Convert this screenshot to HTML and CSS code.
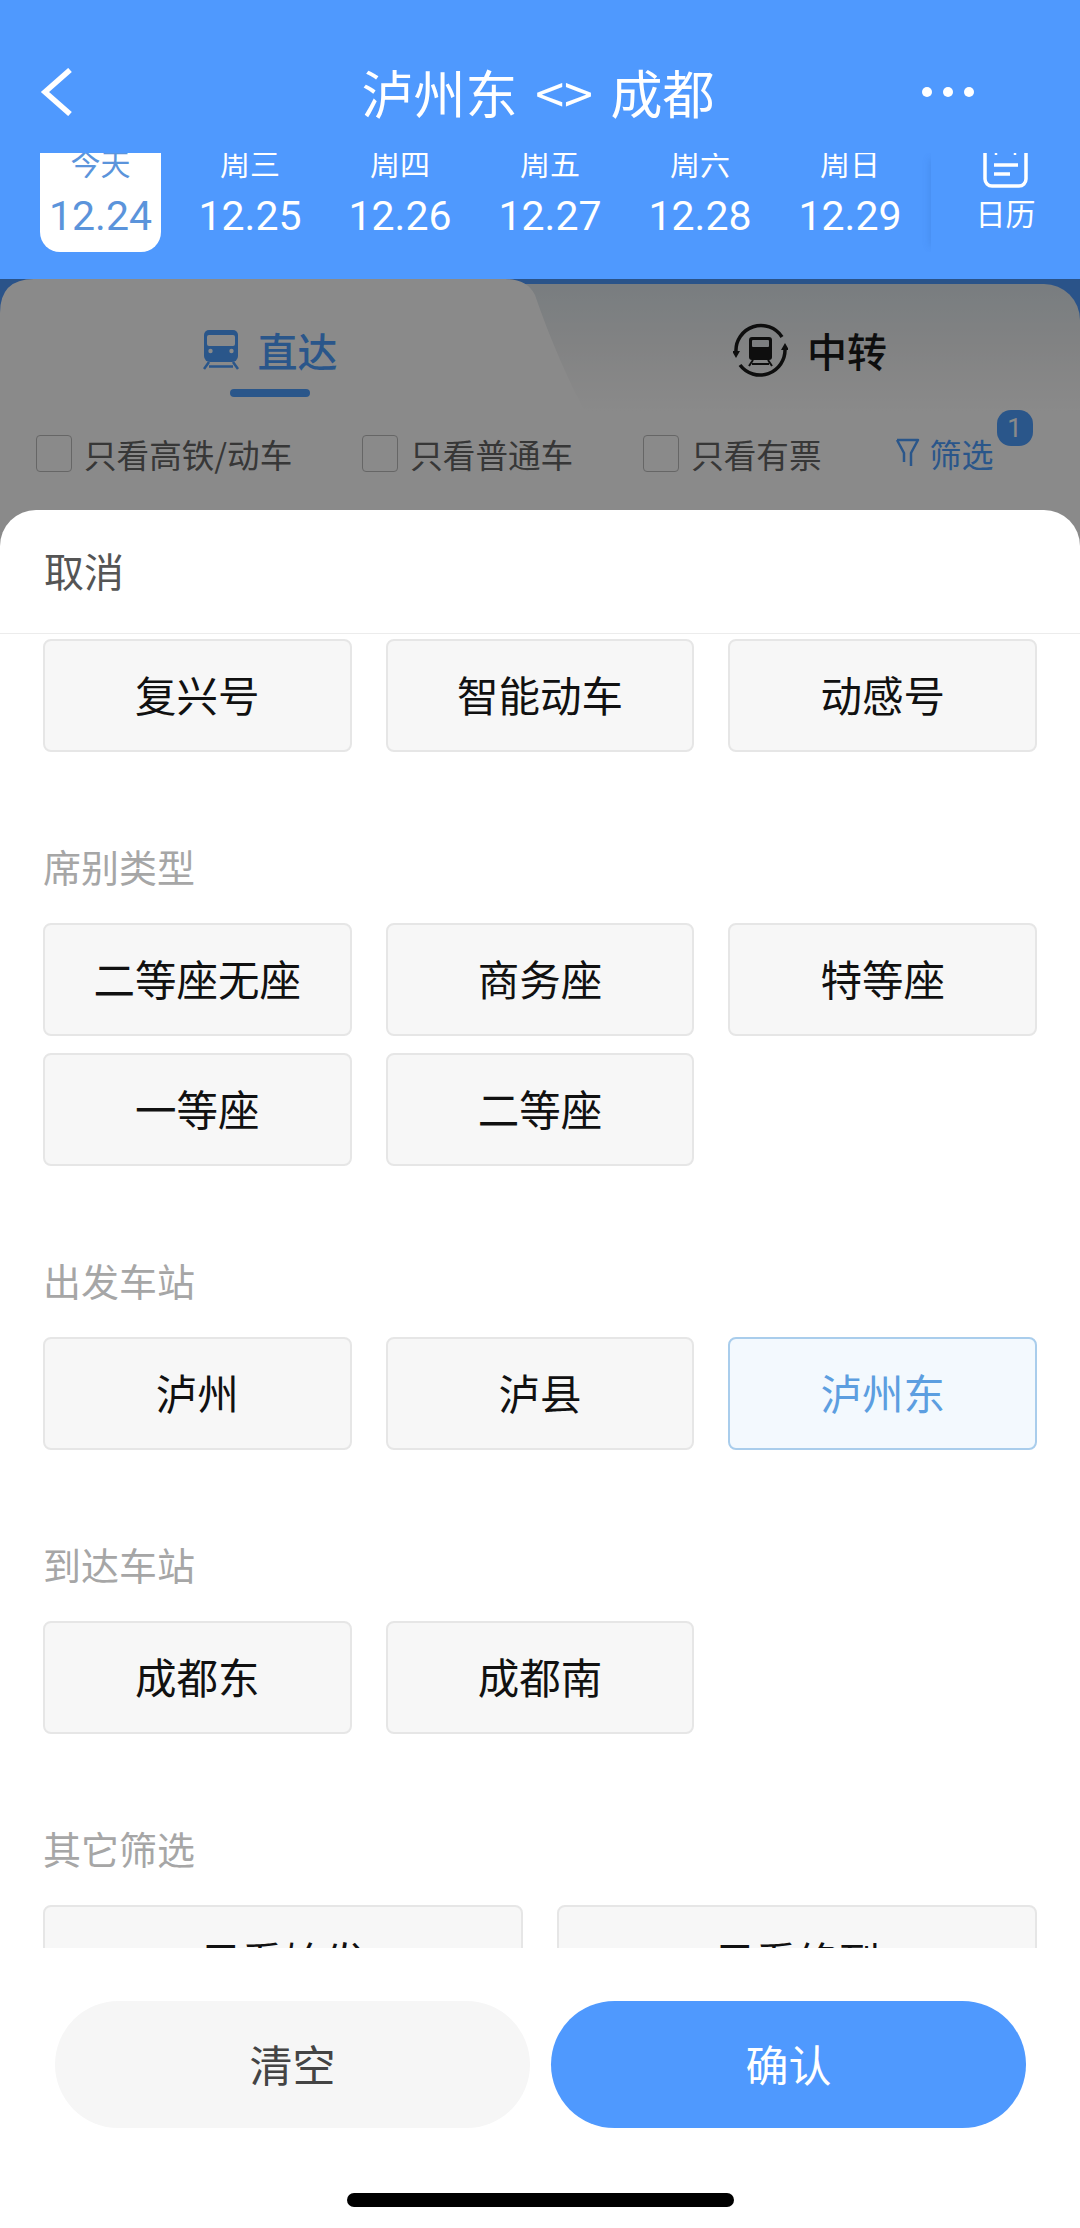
FILE: index.html
```html
<!DOCTYPE html>
<html lang="zh-CN">
<head>
    <meta charset="UTF-8">
    <meta name="viewport" content="width=device-width, initial-scale=1.0">
    <title>泸州东 - 成都 筛选</title>
    <link rel="stylesheet" href="styles.css">
</head>
<body>

    <div class="page">
        <!-- Blue header -->
        <div class="header">
            <div class="title-row">
                <svg class="back-icon" width="34" height="48" viewBox="0 0 34 48"><path d="M30 2 L5 24 L30 46" fill="none" stroke="#fff" stroke-width="5.5"/></svg>
                <div class="title">泸州东 &lt;&gt; 成都</div>
                <div class="more"><span></span><span></span><span></span></div>
            </div>
            <div class="dates">
                <div class="day day-active">
                    <div class="day-week">今天</div>
                    <div class="day-num">12.24</div>
                </div>
                <div class="day">
                    <div class="day-week">周三</div>
                    <div class="day-num">12.25</div>
                </div>
                <div class="day">
                    <div class="day-week">周四</div>
                    <div class="day-num">12.26</div>
                </div>
                <div class="day">
                    <div class="day-week">周五</div>
                    <div class="day-num">12.27</div>
                </div>
                <div class="day">
                    <div class="day-week">周六</div>
                    <div class="day-num">12.28</div>
                </div>
                <div class="day">
                    <div class="day-week">周日</div>
                    <div class="day-num">12.29</div>
                </div>
                <div class="calendar">
                    <svg width="45" height="35" viewBox="0 0 45 35" fill="none" stroke="#fff" stroke-width="3.5">
                        <path d="M2 0 V26 a7 7 0 0 0 7 7 H36 a7 7 0 0 0 7 -7 V0"/>
                        <path d="M11 12 H35 M11 21 H27"/>
                        <path d="M13 0 V2 M32 0 V2" stroke-width="2.5"/>
                    </svg>
                    <div class="calendar-label">日历</div>
                </div>
            </div>
        </div>

        <!-- Train list tabs, dimmed behind the sheet -->
        <div class="panel">
            <div class="tabs">
                <div class="tab tab-direct">
                    <div class="tab-label">
                        <svg width="36" height="40" viewBox="0 0 36 40">
                            <path d="M6 0 H30 a5 5 0 0 1 5 5 V26 a6 6 0 0 1 -6 6 H7 a6 6 0 0 1 -6 -6 V5 a5 5 0 0 1 5 -5z" fill="#4f9fff"/>
                            <rect x="4" y="5" width="28" height="11" rx="2" fill="#fff"/>
                            <circle cx="7.5" cy="21" r="2.2" fill="#fff"/>
                            <circle cx="28.5" cy="21" r="2.2" fill="#fff"/>
                            <path d="M6 32 L1 39 M30 32 L35 39 M6 36.5 H30" stroke="#4f9fff" stroke-width="2.5" fill="none"/>
                        </svg>
                        <span>直达</span>
                    </div>
                    <div class="tab-line"></div>
                </div>
                <div class="tab tab-transfer">
                    <div class="tab-label">
                        <svg width="55" height="55" viewBox="0 0 55 55">
                            <path d="M3 29 A25 25 0 0 1 49 14 M52 26 A25 25 0 0 1 7 42" fill="none" stroke="#1a1a1a" stroke-width="3.5"/>
                            <path d="M-1 28 L7 28 L3 35z M48 27 L56 27 L52 20z" fill="#1a1a1a"/>
                            <path d="M19 14 H36 a3 3 0 0 1 3 3 V34 a3 3 0 0 1 -3 3 H19 a3 3 0 0 1 -3 -3 V17 a3 3 0 0 1 3 -3z" fill="#1a1a1a"/>
                            <rect x="19" y="17" width="17" height="7" rx="1" fill="#e6e9ec"/>
                            <path d="M20 37 L16 43 M35 37 L39 43 M19 41 H36" stroke="#1a1a1a" stroke-width="2" fill="none"/>
                        </svg>
                        <span>中转</span>
                    </div>
                </div>
            </div>
            <div class="filters">
                <div class="check"><span class="check-box"></span>只看高铁/动车</div>
                <div class="check"><span class="check-box"></span>只看普通车</div>
                <div class="check"><span class="check-box"></span>只看有票</div>
                <div class="filter-btn">
                    <svg width="25" height="30" viewBox="0 0 25 30" fill="none" stroke="#4f9fff" stroke-width="2.5" stroke-linejoin="round">
                        <path d="M2 2 H23 L16 15 V28 M2 2 L9 15 V24"/>
                    </svg>
                    <span>筛选</span>
                    <span class="badge">1</span>
                </div>
            </div>
        </div>

        <div class="mask"></div>

        <!-- Filter sheet -->
        <div class="sheet">
            <div class="sheet-head">取消</div>
            <div class="sheet-body">
                <div class="chips">
                    <div class="chip">复兴号</div>
                    <div class="chip">智能动车</div>
                    <div class="chip">动感号</div>
                </div>

                <div class="group-title">席别类型</div>
                <div class="chips">
                    <div class="chip">二等座无座</div>
                    <div class="chip">商务座</div>
                    <div class="chip">特等座</div>
                    <div class="chip">一等座</div>
                    <div class="chip">二等座</div>
                </div>

                <div class="group-title">出发车站</div>
                <div class="chips">
                    <div class="chip">泸州</div>
                    <div class="chip">泸县</div>
                    <div class="chip chip-on">泸州东</div>
                </div>

                <div class="group-title">到达车站</div>
                <div class="chips">
                    <div class="chip">成都东</div>
                    <div class="chip">成都南</div>
                </div>

                <div class="group-title">其它筛选</div>
                <div class="chips chips-two">
                    <div class="chip">只看始发</div>
                    <div class="chip">只看终到</div>
                </div>
            </div>
            <div class="sheet-foot">
                <div class="foot-btns">
                    <div class="btn btn-clear">清空</div>
                    <div class="btn btn-ok">确认</div>
                </div>
                <div class="home-bar"></div>
            </div>
        </div>
    </div>

</body>
</html>
```

FILE: styles.css
```css
body, html {
    margin: 0;
    padding: 0;
    height: 100%;
    overflow: hidden;
}

body {
    font-family: "Noto Sans CJK SC", "Noto Sans", sans-serif;
}

.page {
    position: relative;
    width: 1080px;
    height: 2228px;
    overflow: hidden;
    background-color: #4f99fe;
}

/* Header */
.header {
    height: 279px;
    box-sizing: border-box;
    padding-top: 56px;
    background-color: #4f99fe;
    color: #fff;
}

.title-row {
    display: grid;
    grid-template-columns: 1fr auto 1fr;
    align-items: center;
    height: 72px;
    margin-bottom: 25px;
    padding: 0 40px;
}

.back-icon {
    display: block;
}

.title {
    margin-right: 4px;
    font-size: 52px;
    line-height: 72px;
    word-spacing: 6px;
}

.more {
    display: flex;
    justify-self: end;
    gap: 11px;
    margin-right: 66px;
}

.more span {
    width: 10px;
    height: 10px;
    border-radius: 50%;
    background-color: #fff;
}

.dates {
    display: flex;
    height: 99px;
    margin-left: 25px;
    overflow: hidden; /* the weekday row is cut by the title bar */
}

.day {
    width: 150px;
    height: 99px;
    text-align: center;
}

.day-week {
    height: 40px;
    margin-top: -11px;
    font-size: 30px;
    line-height: 40px;
}

.day-num {
    height: 50px;
    margin-top: 9px;
    font-family: Roboto, "Noto Sans", sans-serif;
    font-size: 41px;
    line-height: 50px;
}

.day-active {
    width: 121px;
    margin: 0 14px 0 15px;
    border-radius: 0 0 20px 20px;
    background-color: #fff;
    color: #5b94db;
}

.calendar {
    flex: 1;
    display: flex;
    flex-direction: column;
    align-items: center;
    margin-left: 6px;
    box-shadow: -6px 0 8px -6px rgba(40, 90, 170, 0.25);
}

.calendar svg {
    display: block;
}

.calendar-label {
    margin-top: 4px;
    font-size: 30px;
    line-height: 40px;
}

/* Tabs and quick filters */
.panel {
    height: 600px;
}

.tabs {
    display: flex;
}

.tab {
    display: flex;
    flex-direction: column;
    align-items: center;
    box-sizing: border-box;
}

.tab-direct {
    position: relative;
    z-index: 1;
    width: 540px;
    height: 132px;
    padding-top: 44px;
    color: #4f9fff;
}

/* white shape with the slanted right edge */
.tab-direct::before {
    content: "";
    position: absolute;
    top: 0;
    bottom: 0;
    left: 0;
    width: 585px;
    z-index: -1;
    background-color: #fff;
    clip-path: path("M0 132 V34 Q0 0 34 0 H505 Q527 0 535 16 C550 60 570 105 585 132 Z");
}

.tab-transfer {
    flex: 1;
    margin-left: -30px;
    margin-top: 5px;
    padding: 39px 0 0 30px;
    border-radius: 0 36px 0 0;
    background: linear-gradient(#dfe7ec, #f2f3f4 55%, #fff);
    color: #1a1a1a;
}

.tab-label {
    display: flex;
    align-items: center;
    gap: 19px;
    height: 54px;
    font-size: 40px;
    font-weight: 500;
}

.tab-label svg {
    display: block;
}

.tab-line {
    width: 80px;
    height: 8px;
    margin-top: 12px;
    border-radius: 4px;
    background-color: #4f9fff;
}

.filters {
    display: flex;
    align-items: center;
    gap: 70px;
    height: 84px;
    padding: 0 0 120px 36px;
    background-color: #fff;
    color: #666;
    font-size: 32.6px;
}

.check {
    display: flex;
    align-items: center;
    gap: 12px;
}

.check-box {
    width: 34px;
    height: 35px;
    border: 1px solid #bdbdbd;
    border-radius: 4px;
}

.filter-btn {
    position: relative;
    display: flex;
    align-items: center;
    gap: 9px;
    margin-left: 4px;
    color: #4f9fff;
    font-size: 32px;
}

.filter-btn svg {
    display: block;
}

.badge {
    position: absolute;
    top: -20px;
    right: -39px;
    width: 36px;
    height: 36px;
    border-radius: 14px;
    background-color: #4f9fff;
    color: #fff;
    font-family: Roboto, sans-serif;
    font-size: 26px;
    line-height: 36px;
    text-align: center;
}

.mask {
    position: absolute;
    z-index: 2;
    top: 279px;
    left: 0;
    right: 0;
    bottom: 0;
    background-color: rgba(0, 0, 0, 0.46);
}

/* Bottom sheet */
.sheet {
    position: absolute;
    z-index: 3;
    top: 510px;
    left: 0;
    right: 0;
    bottom: 0;
    display: flex;
    flex-direction: column;
    border-radius: 36px 36px 0 0;
    background-color: #fff;
}

.sheet-head {
    flex: none;
    height: 123px;
    padding-left: 44px;
    border-bottom: 1px solid #ececec;
    color: #555;
    font-size: 40px;
    line-height: 120px;
}

.sheet-body {
    height: 1314px;
    box-sizing: border-box;
    padding: 5px 43px 0;
    overflow: hidden; /* the list scrolls behind the footer */
}

.group-title {
    height: 50px;
    margin: 91px 0 30px;
    color: #a6a6a6;
    font-size: 38px;
    line-height: 45px;
}

.chips {
    display: grid;
    grid-template-columns: repeat(3, 1fr);
    gap: 17px 34px;
}

.chips-two {
    grid-template-columns: repeat(2, 1fr);
}

.chip {
    height: 113px;
    box-sizing: border-box;
    border: 2px solid #e6e6e6;
    border-radius: 8px;
    background-color: #f7f7f7;
    color: #111;
    font-size: 41.5px;
    line-height: 106px;
    text-align: center;
}

.chip-on {
    border-color: #a9cdec;
    background-color: #f3f9fe;
    color: #5c9ee0;
}

.sheet-foot {
    flex: 1;
    padding-top: 53px;
}

.foot-btns {
    display: flex;
    gap: 21px;
    padding: 0 54px 0 55px;
}

.btn {
    flex: 1;
    height: 127px;
    border-radius: 64px;
    font-size: 43px;
    line-height: 125px;
    text-align: center;
}

.btn-clear {
    background-color: #f6f6f6;
    color: #444;
}

.btn-ok {
    background-color: #4f99fe;
    color: #fff;
}

.home-bar {
    width: 387px;
    height: 14px;
    margin: 65px auto 0;
    border-radius: 7px;
    background-color: #000;
}
```
